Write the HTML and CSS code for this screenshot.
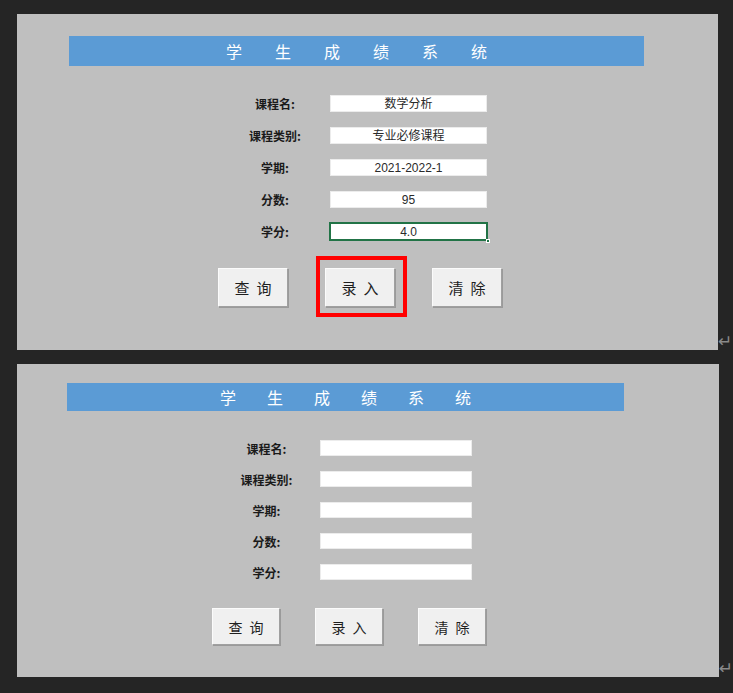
FILE: index.html
```html
<!DOCTYPE html>
<html lang="zh-CN">
<head>
<meta charset="utf-8">
<title>学生成绩系统</title>
<link rel="stylesheet" href="styles.css">
</head>
<body>
<main class="page">
  <div class="sheet-row sheet-row--a">
    <section class="panel panel--a">
      <h1 class="banner">学生成绩系统</h1>
      <div class="form">
        <span class="form__label">课程名:</span><div class="form__field">数学分析</div>
        <span class="form__label">课程类别:</span><div class="form__field">专业必修课程</div>
        <span class="form__label">学期:</span><div class="form__field">2021-2022-1</div>
        <span class="form__label">分数:</span><div class="form__field">95</div>
        <span class="form__label">学分:</span><div class="form__field form__field--active">4.0<span class="fill-handle"></span></div>
      </div>
      <div class="actions">
        <button class="btn">查询</button>
        <div class="btn-wrap"><button class="btn">录入</button><span class="highlight"></span></div>
        <button class="btn">清除</button>
      </div>
    </section>
    <span class="return-mark">↵</span>
  </div>
  <div class="sheet-row sheet-row--b">
    <section class="panel panel--b">
      <h1 class="banner">学生成绩系统</h1>
      <div class="form">
        <span class="form__label">课程名:</span><div class="form__field"></div>
        <span class="form__label">课程类别:</span><div class="form__field"></div>
        <span class="form__label">学期:</span><div class="form__field"></div>
        <span class="form__label">分数:</span><div class="form__field"></div>
        <span class="form__label">学分:</span><div class="form__field"></div>
      </div>
      <div class="actions">
        <button class="btn">查询</button>
        <button class="btn">录入</button>
        <button class="btn">清除</button>
      </div>
    </section>
    <span class="return-mark">↵</span>
  </div>
</main>
</body>
</html>
```
FILE: styles.css
```css
* { box-sizing: border-box; }
html, body { margin: 0; padding: 0; }
body {
  background: #252525;
  width: 733px;
  height: 693px;
  overflow: hidden;
  font-family: "Noto Sans CJK SC", "Liberation Sans", sans-serif;
}
.page {
  padding: 14px 0 0 17px;
}
.sheet-row {
  display: flex;
  align-items: flex-end;
}
.sheet-row--b { margin-top: 14px; }

.panel {
  background: #bfbfbf;
  display: flex;
  flex-direction: column;
  align-items: flex-start;
}
.panel--a { width: 701px; height: 336px; padding-top: 22px; }
.panel--b { width: 702px; height: 313px; padding-top: 19px; }

.return-mark {
  color: #8a8a8a;
  font-family: "DejaVu Sans", sans-serif;
  font-size: 17px;
  line-height: 16px;
  margin-left: 0;
  margin-bottom: 1px;
}

.banner {
  margin: 0;
  background: #5b9bd5;
  color: #fff;
  font-weight: 400;
  text-align: center;
  font-family: "Noto Sans CJK SC", sans-serif;
}
.panel--a .banner {
  margin-left: 52px;
  width: 575px;
  height: 30px;
  line-height: 30px;
  font-size: 16px;
  letter-spacing: 33px;
  padding-left: 33px;
}
.panel--b .banner {
  margin-left: 50px;
  width: 557px;
  height: 28px;
  line-height: 28px;
  font-size: 16px;
  letter-spacing: 31px;
  padding-left: 31px;
}

.form {
  display: grid;
  column-gap: 20px;
  row-gap: 15px;
  margin-top: 29px;
}
.panel--a .form {
  margin-left: 223px;
  grid-template-columns: 70px 157px;
  grid-auto-rows: 17px;
}
.panel--b .form {
  margin-left: 216px;
  grid-template-columns: 67px 152px;
  grid-auto-rows: 16px;
}
.form__label {
  text-align: center;
  font-weight: 700;
  font-size: 12px;
  color: #1a1a1a;
  line-height: 18px;
  white-space: nowrap;
}
.panel--b .form__label { line-height: 17px; }
.form__field {
  position: relative;
  background: #fff;
  text-align: center;
  font-family: "Liberation Sans", "Noto Sans CJK SC", sans-serif;
  font-size: 12px;
  line-height: 17px;
  padding-top: 1px;
  color: #2a2a2a;
  box-shadow: inset 0 0 0 1px #ececec;
}
.form__field--active {
  box-shadow: inset 0 0 0 1px #217346, 0 0 0 1px #217346;
}
.fill-handle {
  position: absolute;
  right: -3px;
  bottom: -3px;
  width: 4px;
  height: 4px;
  background: #217346;
  border: 1px solid #fff;
}

.actions {
  display: flex;
  margin-top: 28px;
}
.panel--a .actions { margin-left: 201px; gap: 37px; }
.panel--b .actions { margin-left: 195px; gap: 35px; }

.btn-wrap { position: relative; display: flex; }
.btn {
  margin: 0;
  padding: 0;
  background: #f0f0f0;
  border: none;
  border-top: 1px solid #fbfbfb;
  border-left: 1px solid #fbfbfb;
  border-right: 1px solid #a0a0a0;
  border-bottom: 1px solid #a0a0a0;
  box-shadow: 1px 1px 0 #9a9a9a;
  color: #1e1e1e;
  font-family: "Noto Sans CJK SC", serif;
  font-weight: 400;
  text-align: center;
}
.panel--a .btn {
  width: 70px;
  height: 39px;
  font-size: 15px;
  letter-spacing: 7px;
  padding-left: 7px;
}
.panel--b .btn {
  width: 68px;
  height: 37px;
  font-size: 14px;
  letter-spacing: 7px;
  padding-left: 7px;
}
.highlight {
  position: absolute;
  left: -9px;
  top: -12px;
  width: 91px;
  height: 61px;
  border: 4px solid #ff0000;
  pointer-events: none;
}
```
